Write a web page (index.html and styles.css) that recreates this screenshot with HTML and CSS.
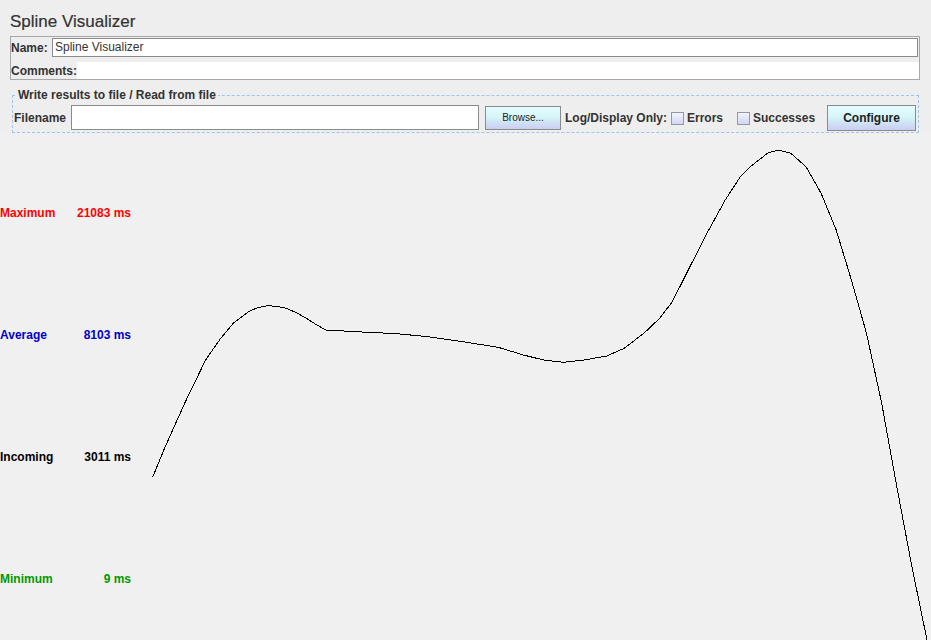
FILE: index.html
```html
<!DOCTYPE html>
<html>
<head>
<meta charset="utf-8">
<title>Spline Visualizer</title>
<link rel="stylesheet" href="styles.css">
</head>
<body>
<div class="title">Spline Visualizer</div>
<div class="panel">
  <div class="row row-name">
    <span class="lbl lbl-name">Name:</span>
    <div class="field field-name">Spline Visualizer</div>
  </div>
  <div class="row row-comments">
    <span class="lbl lbl-comments">Comments:</span>
    <div class="comments-area"></div>
  </div>
</div>
<fieldset class="filebox">
  <legend>Write results to file / Read from file</legend>
  <div class="filerow">
    <span class="lbl lbl-file">Filename</span>
    <div class="field field-file"></div>
    <div class="btn btn-browse">Browse...</div>
    <span class="lbl lbl-log">Log/Display Only:</span>
    <span class="check"></span>
    <span class="lbl lbl-errors">Errors</span>
    <span class="check"></span>
    <span class="lbl lbl-succ">Successes</span>
    <div class="btn btn-config">Configure</div>
  </div>
</fieldset>
<div class="chart">
  <div class="legend-col">
    <div class="stat stat-max"><span>Maximum</span><span>21083 ms</span></div>
    <div class="stat stat-avg"><span>Average</span><span>8103 ms</span></div>
    <div class="stat stat-inc"><span>Incoming</span><span>3011 ms</span></div>
    <div class="stat stat-min"><span>Minimum</span><span>9 ms</span></div>
  </div>
  <svg class="plot" width="791" height="507" viewBox="140 133 791 507">
    <polyline fill="none" stroke="#000" stroke-width="1" points="152.6,477.3 165.2,446.7 185.4,401.7 205.6,360 220.7,338.3 233.3,323.3 248.5,311.7 258,307.5 267.6,305.7 277,306.3 286.3,308.3 296,312.5 306.5,318.3 316,324.5 325.7,330 362,332 397.3,333.7 427.6,336.7 462.9,341.7 498.2,347.3 523.4,355 543.6,360 563.8,362.3 584,360 606.7,356 624.3,348.3 644.5,332.7 659.7,318.3 672.3,301.7 684.9,276.7 705.1,236.7 725.2,200 740.4,176.7 750,167 758,160.7 768.2,152.7 778.7,150 790.8,153.3 806,166.7 821.1,193.3 836.2,230 851.4,280 866.5,333.3 881.7,403.3 896.8,486.7 911.9,566.7 927,640 928,650"/>
  </svg>
</div>
</body>
</html>
```

FILE: styles.css
```css
html, body {
  margin: 0;
  padding: 0;
}
body {
  width: 931px;
  height: 640px;
  overflow: hidden;
  background: #eeeeee;
  font-family: "Liberation Sans", Arial, sans-serif;
  color: #333333;
}
.title {
  padding: 12px 0 0 10px;
  height: 20px;
  line-height: 20px;
  font-size: 17px;
  color: #333333;
  -webkit-text-stroke: 0.2px #333333;
}
.panel {
  margin: 4px 11px 0 10px;
  border: 1px solid #a8a8a8;
}
.row {
  display: flex;
  align-items: flex-start;
}
.row-name {
  height: 20px;
  padding-top: 1px;
}
.row-comments {
  height: 17px;
  margin-top: 4px;
}
.lbl {
  font-size: 12px;
  font-weight: bold;
  color: #333333;
  white-space: nowrap;
}
.lbl-name {
  width: 41px;
  line-height: 19px;
  padding-top: 1px;
}
.lbl-comments {
  width: 66px;
  line-height: 17px;
  padding-top: 1px;
}
.field {
  box-sizing: border-box;
  background: #ffffff;
  border: 1px solid #8a8a8a;
  font-size: 12px;
  color: #333333;
}
.field-name {
  width: 866px;
  height: 19px;
  line-height: 17px;
  padding-left: 2px;
}
.comments-area {
  flex: 1;
  height: 17px;
  background: #ffffff;
}
.filebox {
  margin: 8px 12px 0 12px;
  padding: 3px 1px 1px 1px;
  border: 1px dashed #9cc6f0;
  min-width: 0;
}
.filebox legend {
  margin-left: 2px;
  padding: 0 2px;
  font-size: 12px;
  font-weight: bold;
  line-height: 14px;
  color: #333333;
}
.filerow {
  display: flex;
  align-items: flex-start;
  height: 26px;
}
.lbl-file {
  margin-left: 0;
  width: 57px;
  line-height: 26px;
}
.field-file {
  width: 408px;
  height: 25px;
}
.btn {
  box-sizing: border-box;
  border: 1px solid #8a8a8a;
  background: linear-gradient(#e4fcfd 0%, #d6f6f8 45%, #cfe3f4 70%, #cccdf3 100%);
  text-align: center;
  color: #222222;
}
.btn-browse {
  margin: 1px 0 0 6px;
  width: 76px;
  height: 24px;
  line-height: 22px;
  font-size: 10px;
}
.lbl-log {
  margin-left: 4px;
  width: 106px;
  line-height: 26px;
}
.check {
  box-sizing: border-box;
  margin-top: 7px;
  width: 13px;
  height: 13px;
  border: 1px solid #8f9aa8;
  background: linear-gradient(#f2f4fc, #d2d6f2);
}
.lbl-errors {
  margin-left: 3px;
  width: 50px;
  line-height: 26px;
}
.lbl-succ {
  margin-left: 3px;
  width: 74px;
  line-height: 26px;
}
.btn-config {
  width: 89px;
  height: 26px;
  line-height: 24px;
  font-size: 12px;
  font-weight: bold;
}
.chart {
  display: grid;
  grid-template-columns: 140px 791px;
  height: 507px;
  background: #f0f0f0;
}
.legend-col {
  display: flex;
  flex-direction: column;
  gap: 106px;
  padding-top: 72px;
}
.stat {
  display: flex;
  justify-content: space-between;
  width: 131px;
  height: 16px;
  line-height: 16px;
  font-size: 12px;
  font-weight: bold;
}
.stat-max { color: #ff0000; }
.stat-avg { color: #0000cc; }
.stat-inc { color: #000000; }
.stat-min { color: #009900; }
.plot {
  display: block;
  overflow: visible;
  shape-rendering: crispEdges;
}
```
